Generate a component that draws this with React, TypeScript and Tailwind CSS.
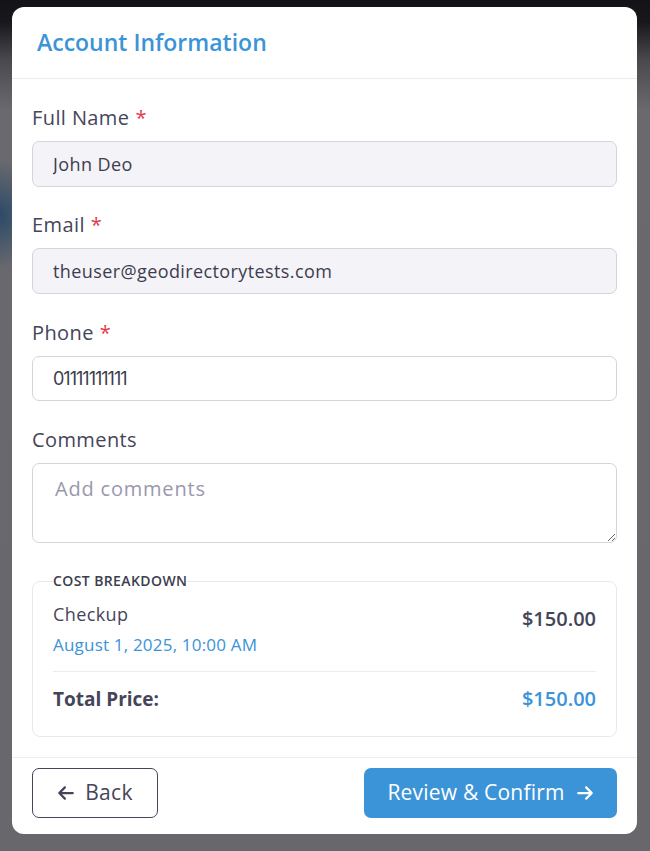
import React from 'react';
import { FaArrowLeft, FaArrowRight } from 'react-icons/fa6';

const font = { fontFamily: '"Open Sans", "Liberation Sans", sans-serif' };

const Label: React.FC<{ text: string; required?: boolean }> = ({ text, required }) => (
  <label className="block text-[20px] leading-[27px] tracking-[0.4px] text-[#45455a] mb-[10px]">
    {text}
    {required && <span className="text-[#e5384a] ml-[6px]">*</span>}
  </label>
);

const inputBase =
  'w-full px-[20px] border border-[#d4d4de] rounded-[7px] text-[18px] text-[#3d3d4e] outline-none';

export default function App() {
  return (
    <div
      className="w-[650px] h-[851px] overflow-hidden pt-[7px] px-[12px] bg-[radial-gradient(ellipse_40px_55px_at_0px_215px,#2c4a68,transparent),linear-gradient(to_bottom,#131317_0px,#18181c_22px,#4a4a4e_60px,#6a6a6e_110px,#68686c_851px)]"
      style={font}
    >
      <div className="bg-white rounded-[12px] w-[625px] h-[827px] flex flex-col">
        {/* header */}
        <div className="h-[72px] flex items-center px-[25px] border-b border-[#ebebf0]">
          <h2 className="text-[23px] font-semibold text-[#3b93d8]">Account Information</h2>
        </div>

        {/* body */}
        <div className="flex-1 px-[20px] pt-[25px]">
          <div>
            <Label text="Full Name" required />
            <input readOnly value="John Deo" className={`${inputBase} h-[46px] bg-[#f3f3f8] tracking-[0.4px]`} />
          </div>

          <div className="mt-[24px]">
            <Label text="Email" required />
            <input
              readOnly
              value="theuser@geodirectorytests.com"
              className={`${inputBase} h-[46px] bg-[#f3f3f8] tracking-[0.4px]`}
            />
          </div>

          <div className="mt-[25px]">
            <Label text="Phone" required />
            <input
              readOnly
              value="01111111111"
              style={{ fontFamily: 'Inter, "Open Sans", sans-serif' }}
              className={`${inputBase} h-[45px] bg-white tracking-[-1px]`}
            />
          </div>

          <div className="mt-[25px]">
            <Label text="Comments" />
            <textarea
              placeholder="Add comments"
              className="block w-full h-[80px] px-[22px] py-[10px] bg-white border border-[#d4d4de] rounded-[7px] text-[20px] tracking-[0.8px] text-[#3d3d4e] placeholder:text-[#9a98ad] outline-none"
            />
          </div>

          <fieldset className="mt-[30px] border border-[#e8e8f0] rounded-[8px] px-[20px] pb-[22px]">
            <legend className="px-0 text-[14px] font-semibold uppercase tracking-[0.4px] text-[#3d3d4e] leading-[16px]">
              Cost Breakdown
            </legend>
            <div className="flex justify-between items-start pt-[13px]">
              <div>
                <div className="text-[18px] leading-[24px] tracking-[0.4px] text-[#45455a]">Checkup</div>
                <div className="text-[17px] leading-[24px] tracking-[0.2px] text-[#3b93d8] mt-[7px]">
                  August 1, 2025, 10:00 AM
                </div>
              </div>
              <div className="text-[20px] font-semibold text-[#45455a] mt-[2px]">$150.00</div>
            </div>
            <div className="border-t border-[#ebebf0] mt-[14px] pt-[12px] flex justify-between items-center">
              <div className="text-[19px] font-bold text-[#45455a]">Total Price:</div>
              <div className="text-[20px] font-semibold text-[#3b93d8]">$150.00</div>
            </div>
          </fieldset>
        </div>

        {/* footer */}
        <div className="border-t border-[#ebebf0] h-[77px] px-[20px] pt-[10px] flex justify-between items-start">
          <button className="h-[50px] w-[126px] border border-[#45455a] rounded-[7px] flex items-center justify-center gap-[10px] text-[21px] tracking-[0.3px] text-[#45455a]">
            <FaArrowLeft size={18} />
            Back
          </button>
          <button className="h-[50px] w-[253px] bg-[#3b93d8] rounded-[7px] flex items-center justify-center gap-[11px] text-[21px] tracking-[0.2px] text-white">
            Review &amp; Confirm
            <FaArrowRight size={18} />
          </button>
        </div>
      </div>
    </div>
  );
}
